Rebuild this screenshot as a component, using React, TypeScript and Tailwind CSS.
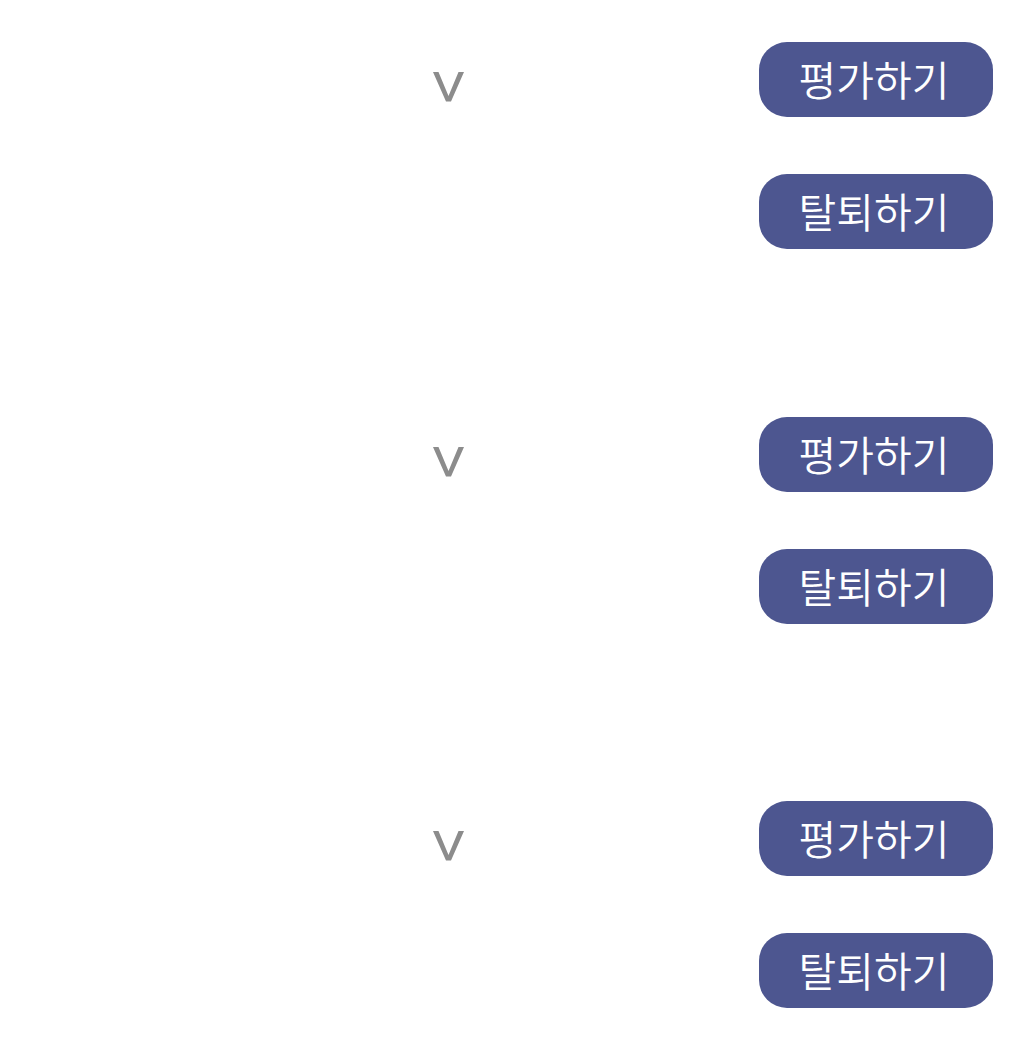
const groups = [
  { id: 1, mt: 'mt-[42px]' },
  { id: 2, mt: 'mt-[168px]' },
  { id: 3, mt: 'mt-[177px]' },
];

function Chevron() {
  return (
    <svg width="31" height="30" viewBox="0 0 31 30" className="text-[#8c8c8c]">
      <polygon points="0,0 5.5,0 15.5,24 25.5,0 31,0 18,29.5 13,29.5" fill="currentColor" />
    </svg>
  );
}

function PillButton({ label }: { label: string }) {
  return (
    <button className="flex h-[75px] w-[234px] items-center justify-center rounded-[28px] bg-[#4d5690] pb-[2px] pr-[4px] text-[41px] font-[350] leading-none text-white font-['Noto_Sans_CJK_KR','Noto_Sans',sans-serif]">
      {label}
    </button>
  );
}

export default function App() {
  return (
    <div className="min-h-[1056px] w-full bg-white">
      {groups.map((g) => (
        <div key={g.id} className={`flex ${g.mt}`}>
          <div className="w-[759px] pl-[433px] pt-[30px]">
            <Chevron />
          </div>
          <div className="flex flex-col gap-[57px]">
            <PillButton label="평가하기" />
            <PillButton label="탈퇴하기" />
          </div>
        </div>
      ))}
    </div>
  );
}
